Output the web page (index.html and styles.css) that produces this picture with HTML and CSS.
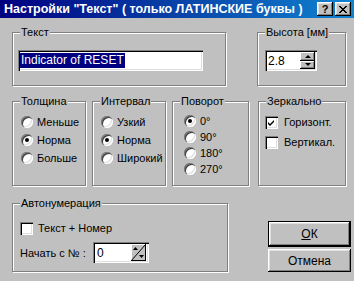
FILE: index.html
```html
<!DOCTYPE html>
<html lang="ru">

<head>
    <meta charset="UTF-8" />
    <title>Настройки "Текст"</title>
    <link rel="stylesheet" href="styles.css">
</head>

<body>
    <div class="window">
        <div class="titlebar">
            <span class="title">Настройки "Текст" ( только ЛАТИНСКИЕ буквы )</span>
            <span class="cap-btn">?</span>
            <span class="cap-btn cap-close">
                <svg width="8" height="7" viewBox="0 0 8 7"><path d="M0 0h2v1h1v1h2v-1h1v-1h2v1h-1v1h-1v1h-1v1h1v1h1v1h1v1h-2v-1h-1v-1h-2v1h-1v1h-2v-1h1v-1h1v-1h1v-1h-1v-1h-1v-1h-1z" fill="#000"/></svg>
            </span>
        </div>

        <div class="content">
            <div class="row row-top">
                <div class="group g-text">
                    <div class="group-title">Текст</div>
                    <div class="group-body">
                        <div class="field field-text"><span class="selected">Indicator of RESET</span></div>
                    </div>
                </div>
                <div class="group g-height">
                    <div class="group-title">Высота [мм]</div>
                    <div class="group-body">
                        <div class="field spin">
                            <span class="spin-value">2.8</span>
                            <span class="spin-btns">
                                <span class="spin-btn"><i class="arrow-up"></i></span>
                                <span class="spin-btn"><i class="arrow-down"></i></span>
                            </span>
                        </div>
                    </div>
                </div>
            </div>

            <div class="row row-mid">
                <div class="group g-weight">
                    <div class="group-title">Толщина</div>
                    <div class="group-body options">
                        <div class="option"><span class="radio"></span>Меньше</div>
                        <div class="option"><span class="radio checked"></span>Норма</div>
                        <div class="option"><span class="radio"></span>Больше</div>
                    </div>
                </div>
                <div class="group g-spacing">
                    <div class="group-title">Интервал</div>
                    <div class="group-body options">
                        <div class="option"><span class="radio"></span>Узкий</div>
                        <div class="option"><span class="radio checked"></span>Норма</div>
                        <div class="option"><span class="radio"></span>Широкий</div>
                    </div>
                </div>
                <div class="group g-rotate">
                    <div class="group-title">Поворот</div>
                    <div class="group-body options">
                        <div class="option"><span class="radio checked"></span>0°</div>
                        <div class="option"><span class="radio"></span>90°</div>
                        <div class="option"><span class="radio"></span>180°</div>
                        <div class="option"><span class="radio"></span>270°</div>
                    </div>
                </div>
                <div class="group g-mirror">
                    <div class="group-title">Зеркально</div>
                    <div class="group-body options">
                        <div class="option">
                            <span class="check"><svg width="9" height="9" viewBox="0 0 9 9"><path d="M1 4l2 2 4-4v2l-4 4-2-2z" fill="#000"/></svg></span>Горизонт.
                        </div>
                        <div class="option"><span class="check"></span>Вертикал.</div>
                    </div>
                </div>
            </div>

            <div class="row row-bottom">
                <div class="group g-auto">
                    <div class="group-title">Автонумерация</div>
                    <div class="group-body">
                        <div class="option"><span class="check"></span>Текст + Номер</div>
                        <div class="start-row">
                            <span class="start-label">Начать с № :</span>
                            <div class="field spin spin-small">
                                <span class="spin-value">0</span>
                                <span class="spin-diag">
                                    <svg width="15" height="17" viewBox="0 0 15 17">
                                        <path d="M0 17L15 0" stroke="#000" stroke-width="1"/>
                                        <path d="M2 6h5l-2.5-3z" fill="#000"/>
                                        <path d="M8 11h5l-2.5 3z" fill="#000"/>
                                    </svg>
                                </span>
                            </div>
                        </div>
                    </div>
                </div>
                <div class="actions">
                    <div class="btn btn-default"><span class="btn-face"><u>О</u>К</span></div>
                    <div class="btn"><span class="btn-face">Отмена</span></div>
                </div>
            </div>
        </div>
    </div>
</body>

</html>
```

FILE: styles.css
```css
* {
    margin: 0;
    padding: 0;
    box-sizing: border-box;
}

body {
    background: #c0c0c0;
    font-family: "Liberation Sans", Arial, sans-serif;
    font-size: 11px;
    color: #000;
}

.window {
    width: 354px;
    height: 281px;
    background: #c0c0c0;
    overflow: hidden;
}

/* title bar */
.titlebar {
    height: 18px;
    display: flex;
    align-items: center;
    padding: 0 3px 0 4px;
    background: linear-gradient(90deg, #000080, #1084d0);
    color: #fff;
    font-weight: 700;
    font-size: 12.5px;
}

.title {
    flex: 1;
    white-space: nowrap;
}

.cap-btn {
    width: 16px;
    height: 14px;
    display: flex;
    align-items: center;
    justify-content: center;
    background: #c0c0c0;
    color: #000;
    font-size: 11px;
    font-weight: 700;
    box-shadow: inset -1px -1px #000, inset 1px 1px #fff, inset -2px -2px #808080, inset 2px 2px #dfdfdf;
}

.cap-close {
    margin-left: 2px;
}

/* layout */
.content {
    padding: 14px 0 0 12px;
}

.row {
    display: flex;
    align-items: flex-start;
}

.row-mid {
    margin-top: 15px;
    gap: 6px;
}

.row-bottom {
    margin-top: 17px;
}

/* group boxes */
.group {
    border: 1px solid #808080;
    box-shadow: inset 1px 1px #fff, 1px 1px #fff;
}

.group-title {
    margin: -8px 0 0 7px;
    padding: 0 1px;
    width: fit-content;
    line-height: 14px;
    background: #c0c0c0;
}

.g-text {
    width: 214px;
    height: 54px;
}

.g-text .group-body {
    padding: 11px 0 0 5px;
}

.g-height {
    width: 89px;
    height: 54px;
    margin-left: 31px;
}

.g-height .group-body {
    padding: 11px 0 0 7px;
}

.g-weight,
.g-spacing {
    width: 74px;
    height: 85px;
}

.g-rotate {
    width: 77px;
    height: 85px;
}

.g-mirror {
    width: 88px;
    height: 85px;
    margin-left: 3px;
}

.g-auto {
    width: 216px;
    height: 69px;
}

.g-auto .group-body {
    padding: 9px 0 0 7px;
}

/* fields */
.field {
    display: flex;
    align-items: center;
    height: 21px;
    background: #fff;
    box-shadow: inset 1px 1px #808080, inset 2px 2px #000, inset -1px -1px #fff, inset -2px -2px #dfdfdf;
    padding: 2px;
    font-size: 12px;
}

.field-text {
    width: 185px;
}

.selected {
    background: #000080;
    color: #fff;
    padding: 0 1px;
    line-height: 15px;
}

.spin {
    width: 52px;
    justify-content: space-between;
}

.spin-value {
    padding-left: 1px;
}

.spin-btns {
    width: 15px;
    height: 17px;
    display: flex;
    flex-direction: column;
}

.spin-btn {
    flex: 1;
    display: flex;
    align-items: center;
    justify-content: center;
    background: #c0c0c0;
    box-shadow: inset -1px -1px #000, inset 1px 1px #fff, inset -2px -2px #808080;
}

.arrow-up,
.arrow-down {
    width: 0;
    height: 0;
    border-left: 3px solid transparent;
    border-right: 3px solid transparent;
}

.arrow-up {
    border-bottom: 3px solid #000;
}

.arrow-down {
    border-top: 3px solid #000;
}

.spin-small {
    width: 56px;
}

.spin-small .spin-value {
    padding-left: 2px;
}

.spin-diag {
    width: 15px;
    height: 17px;
    margin-right: 1px;
    background: #c0c0c0;
    box-shadow: inset -1px -1px #000, inset 1px 1px #fff;
}

.spin-diag svg {
    display: block;
}

/* radios and checks */
.options {
    padding-top: 5px;
}

.g-weight .options,
.g-spacing .options {
    padding-left: 8px;
}

.g-weight .option,
.g-spacing .option {
    height: 18px;
}

.g-rotate .options {
    padding-left: 11px;
}

.g-rotate .option {
    height: 16px;
}

.g-mirror .options {
    padding: 4px 0 0 6px;
}

.g-mirror .option {
    height: 20px;
    gap: 5px;
}

.option {
    display: flex;
    align-items: center;
    gap: 4px;
    height: 18px;
    white-space: nowrap;
}

.radio {
    width: 12px;
    height: 12px;
    border-radius: 50%;
    background: #fff;
    box-shadow: inset 1px 1px #808080, inset 2px 2px #404040, inset -1px -1px #fff, inset -2px -2px #dfdfdf;
    display: flex;
    align-items: center;
    justify-content: center;
}

.radio.checked::after {
    content: "";
    width: 4px;
    height: 4px;
    border-radius: 50%;
    background: #000;
}

.check {
    width: 13px;
    height: 13px;
    margin-right: 1px;
    background: #fff;
    box-shadow: inset 1px 1px #808080, inset 2px 2px #000, inset -1px -1px #fff, inset -2px -2px #dfdfdf;
    display: flex;
    align-items: center;
    justify-content: center;
}

.check svg {
    display: block;
}

.start-row {
    display: flex;
    align-items: center;
    margin-top: 5px;
}

.start-label {
    width: 73px;
}

/* buttons */
.actions {
    margin: 18px 0 0 40px;
    display: flex;
    flex-direction: column;
    gap: 2px;
}

.btn {
    width: 83px;
    height: 23px;
    display: flex;
    align-items: center;
    justify-content: center;
    background: #c0c0c0;
    box-shadow: inset -1px -1px #000, inset 1px 1px #fff, inset -2px -2px #808080, inset 2px 2px #dfdfdf;
    font-size: 12px;
}

.btn-default {
    height: 26px;
    border: 1px solid #000;
}

.btn u {
    text-decoration: underline;
}
```
